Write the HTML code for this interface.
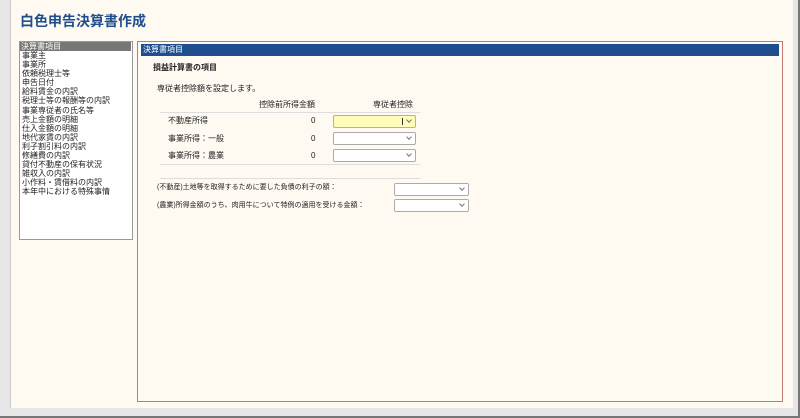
<html><head><style>
body{margin:0;width:800px;height:418px;overflow:hidden;font-family:"Liberation Sans","Noto Sans CJK JP",sans-serif;background:#fff;}
.frame{position:absolute;left:0;top:0;width:798px;height:416px;border-right:2px solid #777;border-bottom:2px solid #777;background:#e6e6e6;}
.inner{position:absolute;left:10px;top:0;width:782px;height:408px;background:#fef9f1;border-left:1px solid #ccc;}
.t{position:absolute;white-space:nowrap;font-size:8px;color:#222;line-height:10px;}
.combo{position:absolute;height:11px;background:#fff;border:1px solid #aaa;border-radius:2px;}
.combo:after{content:"";position:absolute;right:4px;top:2px;width:3px;height:3px;border-right:1px solid #777;border-bottom:1px solid #777;transform:rotate(45deg);}
</style></head><body>
<div class="frame"><div class="inner"></div></div>
<div class="t" style="left:20px;top:12px;font-size:14px;line-height:18px;font-weight:bold;color:#1f4e8f;">白色申告決算書作成</div>
<div style="position:absolute;left:19px;top:41px;width:112px;height:197px;background:#fff;border:1px solid #999;"></div>
<div style="position:absolute;left:20px;top:42px;width:111px;height:9px;background:#777;"></div>
<div class="t" style="left:21px;top:42px;line-height:9px;color:#fff;">決算書項目</div>
<div class="t" style="left:22px;top:51px;line-height:9.1px;font-size:8px;">事業主<br>事業所<br>依頼税理士等<br>申告日付<br>給料賃金の内訳<br>税理士等の報酬等の内訳<br>事業専従者の氏名等<br>売上金額の明細<br>仕入金額の明細<br>地代家賃の内訳<br>利子割引料の内訳<br>修繕費の内訳<br>貸付不動産の保有状況<br>雑収入の内訳<br>小作料・賃借料の内訳<br>本年中における特殊事情</div>
<div style="position:absolute;left:137px;top:41px;width:644px;height:359px;border:1px solid #c47a70;"></div>
<div style="position:absolute;left:141px;top:44px;width:638px;height:12px;background:#1f4e8f;"></div>
<div class="t" style="left:143px;top:45px;color:#fff;">決算書項目</div>
<div class="t" style="left:153px;top:63px;font-weight:bold;">損益計算書の項目</div>
<div class="t" style="left:157px;top:84px;">専従者控除額を設定します。</div>
<div class="t" style="left:259px;top:100px;">控除前所得金額</div>
<div class="t" style="left:373px;top:100px;">専従者控除</div>
<div style="position:absolute;left:160px;top:112px;width:260px;height:1px;background:#ddd;"></div>
<div class="t" style="left:168px;top:116px;">不動産所得</div>
<div class="t" style="left:168px;top:134px;">事業所得：一般</div>
<div class="t" style="left:168px;top:151px;">事業所得：農業</div>
<div class="t" style="left:311px;top:116px;">0</div>
<div class="t" style="left:311px;top:134px;">0</div>
<div class="t" style="left:311px;top:151px;">0</div>
<div class="combo" style="left:333px;top:115px;width:81px;background:#fefcb8;border-color:#e0b030;"><div style="position:absolute;left:68px;top:2px;width:1px;height:7px;background:#333;"></div></div>
<div class="combo" style="left:333px;top:132px;width:81px;"></div>
<div class="combo" style="left:333px;top:149px;width:81px;"></div>
<div style="position:absolute;left:160px;top:164px;width:260px;height:1px;background:#ddd;"></div>
<div style="position:absolute;left:160px;top:178px;width:260px;height:1px;background:#ddd;"></div>
<div class="t" style="left:157px;top:183px;font-size:7px;">(不動産)土地等を取得するために要した負債の利子の額：</div>
<div class="t" style="left:157px;top:201px;font-size:7px;">(農業)所得金額のうち、肉用牛について特例の適用を受ける金額：</div>
<div class="combo" style="left:394px;top:183px;width:73px;"></div>
<div class="combo" style="left:394px;top:199px;width:73px;"></div>
</body></html>
